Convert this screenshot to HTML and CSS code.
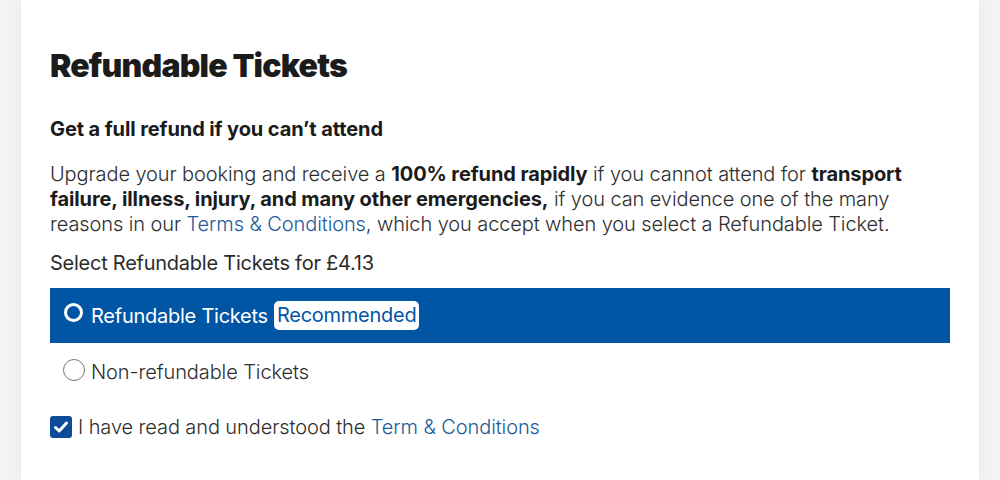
FILE: index.html
```html
<!DOCTYPE html>
<html lang="en">
<head>
<meta charset="utf-8">
<title>Refundable Tickets</title>
<link rel="stylesheet" href="styles.css">
</head>
<body>
<div class="page">
  <section class="card">
    <h1 class="title">Refundable Tickets</h1>
    <h2 class="subtitle">Get a full refund if you can’t attend</h2>
    <p class="desc">Upgrade your booking and receive a <strong>100% refund rapidly</strong> if you cannot attend for <strong>transport failure, illness, injury, and many other emergencies,</strong> if you can evidence one of the many reasons in our <a class="link" href="#">Terms &amp; Conditions</a>, which you accept when you select a Refundable Ticket.</p>
    <p class="price">Select Refundable Tickets for £4.13</p>
    <div class="options">
      <label class="option option-selected">
        <span class="radio radio-on"></span>
        <span class="opt-text">Refundable Tickets</span>
        <span class="badge">Recommended</span>
      </label>
      <label class="option">
        <span class="radio"></span>
        <span class="opt-text">Non-refundable Tickets</span>
      </label>
    </div>
    <label class="agree">
      <span class="check"><svg viewBox="0 0 22 22" width="22" height="22"><path d="M5.5 11.5 L9.2 15 L16.5 7" fill="none" stroke="#fff" stroke-width="3" stroke-linecap="round" stroke-linejoin="round"/></svg></span>
      <span class="agree-text">I have read and understood the <a class="link" href="#">Term &amp; Conditions</a></span>
    </label>
  </section>
</div>
</body>
</html>
```

FILE: styles.css
```css
html, body {
  margin: 0;
  padding: 0;
}
body {
  background: #f3f3f3;
  font-family: Inter, "Noto Sans", sans-serif;
  color: #2b2b2b;
}
.page {
  padding: 0 21px;
}
.card {
  background: #fff;
  min-height: 480px;
  box-sizing: border-box;
  padding: 44px 29px 0;
  box-shadow: 0 0 8px rgba(0,0,0,0.06);
}
.title {
  margin: 0;
  font-size: 32px;
  font-weight: 900;
  color: #1b1b1b;
  letter-spacing: -0.8px;
  line-height: 44px;
}
.subtitle {
  margin: 29px 0 0;
  font-size: 20px;
  font-weight: 700;
  color: #1b1b1b;
  line-height: 24px;
  letter-spacing: -0.1px;
}
.desc {
  margin: 21px 0 0;
  font-size: 20px;
  font-weight: 300;
  line-height: 25px;
  color: #2e2e2e;
  letter-spacing: -0.1px;
}
.desc strong {
  font-weight: 700;
  color: #1b1b1b;
}
.link {
  color: #1e5a98;
  text-decoration: none;
}
.price {
  margin: 13px 0 0;
  font-size: 20px;
  font-weight: 400;
  line-height: 26px;
  color: #2b2b2b;
  letter-spacing: -0.25px;
}
.options {
  margin-top: 12px;
  display: flex;
  flex-direction: column;
}
.option {
  display: flex;
  align-items: center;
  height: 57px;
  padding: 0 13px;
  font-size: 20px;
  font-weight: 300;
  color: #2e2e2e;
  letter-spacing: -0.1px;
}
.option-selected {
  background: #0055a5;
  color: #fff;
  font-weight: 400;
  height: 55px;
  letter-spacing: -0.25px;
}
.radio {
  width: 22px;
  height: 22px;
  border: 1.5px solid #777;
  border-radius: 50%;
  box-sizing: border-box;
  margin-right: 6px;
  flex: none;
  position: relative;
  top: -2px;
}
.radio-on {
  width: 19px;
  height: 19px;
  border: 3px solid #fff;
  margin-left: 1px;
  margin-right: 8px;
  top: -3px;
}
.opt-text {
  line-height: 26px;
}
.badge {
  margin-left: 6px;
  background: #fff;
  color: #0055a5;
  font-weight: 400;
  padding: 1px 3px;
  border-radius: 5px;
  line-height: 27px;
}
.agree {
  display: flex;
  align-items: center;
  margin-top: 14px;
  font-size: 20px;
  font-weight: 300;
  color: #2e2e2e;
  letter-spacing: -0.1px;
}
.check {
  width: 22px;
  height: 22px;
  background: #0c4c96;
  border-radius: 3px;
  display: inline-flex;
  flex: none;
  margin-right: 6px;
}
.agree-text {
  line-height: 26px;
}
```
